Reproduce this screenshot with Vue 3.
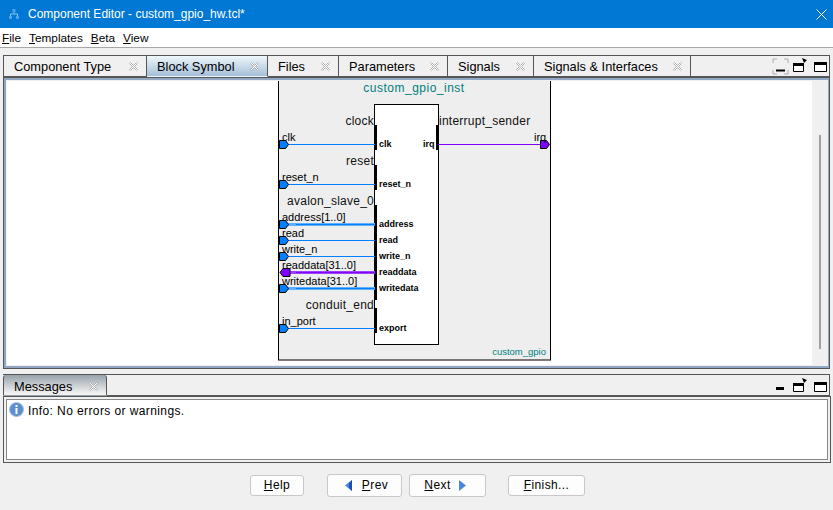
<script setup>
const menus = [['F','ile'],['T','emplates'],['B','eta'],['V','iew']]
const tabs = [
  { name: 'Component Type', w: 144 },
  { name: 'Block Symbol', w: 121, active: true },
  { name: 'Files', w: 71 },
  { name: 'Parameters', w: 109 },
  { name: 'Signals', w: 86 },
  { name: 'Signals & Interfaces', w: 157 },
]
const rows = [
  { ext: 'clk', int: 'clk', y: 144, c: 'blue' },
  { ext: 'reset_n', int: 'reset_n', y: 184, c: 'blue' },
  { ext: 'address[1..0]', int: 'address', y: 224, c: 'blue', bus: true },
  { ext: 'read', int: 'read', y: 240, c: 'blue' },
  { ext: 'write_n', int: 'write_n', y: 256, c: 'blue' },
  { ext: 'readdata[31..0]', int: 'readdata', y: 272, c: 'purple', bus: true, out: true },
  { ext: 'writedata[31..0]', int: 'writedata', y: 288, c: 'blue', bus: true },
  { ext: 'in_port', int: 'export', y: 328, c: 'blue' },
]
const ifaces = [
  { name: 'clock', y: 125, top: 125, h: 25 },
  { name: 'reset', y: 165, top: 165, h: 25 },
  { name: 'avalon_slave_0', y: 205, top: 205, h: 95 },
  { name: 'conduit_end', y: 309, top: 308, h: 25 },
]
const colors = { blue: '#0080ff', purple: '#8000ff' }
const light = { blue: '#5fb0ff', purple: '#a040ff' }
</script>

<template>
  <div class="window">
    <header class="title">
      <svg class="logo" width="12" height="12" viewBox="0 0 12 12">
        <path d="M4.500 1h3v3h-3zM1 8h3v3H1zM8 8h3v3H8z" fill="#4ea3e6"/>
        <path d="M6 4v2M2.500 8V6h7v2" stroke="#8cc4f0" fill="none"/>
      </svg>
      <span class="title-text">Component Editor - custom_gpio_hw.tcl*</span>
      <svg class="close" width="11" height="11" viewBox="0 0 11 11"><path d="M.5.500l10 10M10.500.500l-10 10" stroke="#fff" stroke-width="1"/></svg>
    </header>
    <nav class="menu">
      <span v-for="m in menus" :key="m[0]" class="menu-item"><u>{{ m[0] }}</u>{{ m[1] }}</span>
    </nav>

    <section class="folder top">
      <div class="tabs">
        <div v-for="t in tabs" :key="t.name" class="tab" :class="{ active: t.active }" :style="{ width: t.w + 'px' }">
          <span class="tab-label">{{ t.name }}</span>
          <svg class="x" width="11" height="11" viewBox="0 0 11 11"><path d="M1.500 2.500l1-1 3 3 3-3 1 1-3 3 3 3-1 1-3-3-3 3-1-1 3-3z" fill="#fff" stroke="#a0a0a0" stroke-width=".8"/></svg>
        </div>
        <div class="tab-rest">
          <svg width="17" height="17" viewBox="0 0 17 17" class="fast"><path d="M1 5V1h4M12 1h4v4M1 12v4h4M12 16h4v-4" fill="none" stroke="#aaa"/><path d="M4 12.500h9" stroke="#000" stroke-width="2"/></svg>
          <svg width="15" height="15" viewBox="0 0 15 15" class="det"><path d="M.5 5.500h10v8H.5z" fill="#fff" stroke="#000"/><path d="M0 5h11v3H0z"/><path d="M7 5l4-3M9 0l5 2-3 3z"/></svg>
          <svg width="13" height="11" viewBox="0 0 13 11" class="max"><path d="M.5.500h12v9H.500z" fill="#fff" stroke="#000"/><path d="M0 0h13v3H0z"/></svg>
        </div>
      </div>
      <div class="pane">
        <div class="canvas">
          <svg class="diagram" width="805" height="285" viewBox="7 81 805 285">
            <rect x="278.500" y="60" width="272" height="300" fill="#eee" stroke="#000"/>
            <text x="414" y="92" class="tl" text-anchor="middle">custom_gpio_inst</text>
            <rect x="374.500" y="104.500" width="64" height="240" fill="#fff" stroke="#000"/>
            <text x="546" y="355" class="ts" text-anchor="end">custom_gpio</text>

            <g v-for="f in ifaces" :key="f.name">
              <rect x="374" :y="f.top" width="3" :height="f.h" fill="#000"/>
              <text x="374" :y="f.y" class="if" text-anchor="end">{{ f.name }}</text>
            </g>
            <rect x="436" y="125" width="3" height="25" fill="#000"/>
            <text x="439" y="125" class="if">interrupt_sender</text>

            <g v-for="r in rows" :key="r.ext">
              <template v-if="r.bus">
                <rect x="288" :y="r.y - 1" width="87" height="3" :fill="light[r.c]"/>
                <rect x="296" :y="r.y" width="79" height="1" :fill="colors[r.c]"/>
              </template>
              <rect v-else x="288" :y="r.y" width="87" height="1" :fill="colors[r.c]"/>
              <path v-if="!r.out" :d="`M279.500 ${r.y - 3.5}h6l3 4-3 4h-6z`" :fill="colors[r.c]" stroke="#000"/>
              <path v-else :d="`M280 ${r.y + .5}l3-4h7v8h-7z`" :fill="colors[r.c]" stroke="#000"/>
              <text x="282" :y="r.y - 3" class="ext">{{ r.ext }}</text>
              <text x="379" :y="r.y + 3" class="int">{{ r.int }}</text>
            </g>

            <rect x="438" y="144" width="103" height="1" :fill="colors.purple"/>
            <path d="M540.500 140.500h6l3 4-3 4h-6z" :fill="colors.purple" stroke="#000"/>
            <text x="534" y="141" class="ext">irq</text>
            <text x="423" y="147" class="int">irq</text>
          </svg>
        </div>
        <div class="scroll"><i></i></div>
      </div>
    </section>

    <section class="folder bottom">
      <div class="tabs">
        <div class="tab msg">
          <span class="tab-label">Messages</span>
          <svg class="x" width="11" height="11" viewBox="0 0 11 11"><path d="M1.500 2.500l1-1 3 3 3-3 1 1-3 3 3 3-1 1-3-3-3 3-1-1 3-3z" fill="#fff" stroke="#a0a0a0" stroke-width=".8"/></svg>
        </div>
        <div class="tab-rest msg-rest">
          <svg width="9" height="3" viewBox="0 0 9 3" class="min"><path d="M0 0h8v3H0z"/></svg>
          <svg width="15" height="15" viewBox="0 0 15 15" class="det"><path d="M.5 5.500h10v8H.5z" fill="#fff" stroke="#000"/><path d="M0 5h11v3H0z"/><path d="M7 5l4-3M9 0l5 2-3 3z"/></svg>
          <svg width="13" height="11" viewBox="0 0 13 11" class="max"><path d="M.5.500h12v9H.500z" fill="#fff" stroke="#000"/><path d="M0 0h13v3H0z"/></svg>
        </div>
      </div>
      <div class="log">
        <svg width="15" height="15" viewBox="0 0 15 15"><circle cx="7.500" cy="7.500" r="7" fill="#5b8fd0" stroke="#a8c0dc"/><path d="M6.500 3h2v2h-2zM6.500 6h2v6h-2z" fill="#fff"/></svg>
        <span>Info: No errors or warnings.</span>
      </div>
    </section>

    <footer class="actions">
      <button class="help"><span><u>H</u>elp</span></button>
      <button class="prev">
        <svg width="8" height="11" viewBox="0 0 8 11"><path d="M7 0v11L0 5.500z" fill="#4a86d8"/><path d="M7 0v11L4 8V3z" fill="#1a50b8"/></svg>
        <span><u>P</u>rev</span>
      </button>
      <button class="next">
        <span><u>N</u>ext</span>
        <svg width="8" height="11" viewBox="0 0 8 11"><path d="M1 0v11l7-5.500z" fill="#4a86d8"/></svg>
      </button>
      <button class="finish"><span><u>F</u>inish...</span></button>
    </footer>
  </div>
</template>

<style>
html, body { margin: 0; background: #f0f0f0; }
</style>

<style scoped>
.window {
  width: 833px; height: 510px; overflow: hidden; background: #f0f0f0;
  display: flex; flex-direction: column;
  font-family: "Liberation Sans", Arial, sans-serif; font-size: 12px; color: #000;
}
.title {
  height: 28px; background: #0078d4; color: #fff; display: flex; align-items: center;
  padding: 0 6px 0 8px; font-size: 12px; gap: 8px; flex: none;
}
.title-text { flex: 1; }
.menu {
  height: 19px; background: #fff; border-bottom: 1px solid #a8a8a8; display: flex; align-items: center;
  padding-left: 2px; gap: 8px; font-size: 11.800px; flex: none;
}
.folder { margin: 0 3px; flex: none; display: flex; flex-direction: column; }
.top { margin-top: 7px; height: 314px; }
.tabs {
  height: 21px; display: flex; flex: none; border-top: 1px solid #555; border-right: 1px solid #555;
  background: #f0f0f0;
}
.tab {
  box-sizing: border-box; display: flex; align-items: center; justify-content: space-between;
  padding: 0 7px 0 10px; border-right: 1px solid #555; border-bottom: 1px solid #555;
  font-size: 12.800px; flex: none;
}
.tab:first-child { border-left: 1px solid #555; }
.tab.active {
  background: linear-gradient(#eef7fa, #a5bfd9); border-bottom-color: transparent;
}
.x { flex: none; }
.tab-rest {
  flex: 1; border-bottom: 1px solid #555; display: flex; align-items: center; justify-content: flex-end;
  padding-right: 2px; box-sizing: border-box;
}
.fast { margin-right: 4px; }
.det { margin-right: 6px; margin-top: -1px; }
.max { margin-top: 2px; }
.msg-rest { padding-top: 2px; }
.pane {
  flex: 1; min-height: 0; display: flex; background: #f0f0f0;
  border: 3px solid #91a7c4; border-right-width: 2px; outline: 1px solid #555; outline-offset: -1px;
  padding: 1px 0 1px 1px;
  box-sizing: border-box;
}
.canvas { flex: 1; background: #fff; overflow: hidden; position: relative; }
.diagram { display: block; }
.scroll { width: 16px; position: relative; flex: none; }
.scroll i { position: absolute; left: 7px; top: 54px; width: 2px; height: 214px; background: #a0a0a0; }
.tl { font: 12px "Liberation Sans", sans-serif; fill: #008080; letter-spacing: .5px; }
.ts { font: 9.500px "Liberation Sans", sans-serif; fill: #008080; }
.if { font: 12px "Liberation Sans", sans-serif; fill: #111; letter-spacing: .25px; }
.ext { font: 11px "Liberation Sans", sans-serif; fill: #000; }
.int { font: bold 9px "Liberation Sans", sans-serif; fill: #000; }

.bottom { margin-top: 5px; height: 89px; }
.tab.msg {
  width: 104px; background: linear-gradient(#97a2ab, #f0f0f0 90%); border-bottom-color: transparent;
  border-radius: 3px 3px 0 0; padding-top: 2px;
}
.min { margin-right: 8px; margin-top: 5px; }
.log {
  flex: 1; min-height: 0; background: #fff; box-sizing: border-box;
  border: 1px solid #888;
  margin: 3px 2px 3px 3px; display: flex; align-items: flex-start; gap: 4px;
  padding: 2px 2px; font-size: 12px; letter-spacing: .4px;
  box-shadow: 0 0 0 2px #f0f0f0, 0 0 0 3px #555;
}
.log span { line-height: 18px; }

.actions { flex: 1; display: flex; align-items: center; padding-left: 250px; margin-top: -3px; }
button {
  font: 12px "Liberation Sans", sans-serif; letter-spacing: .4px; color: #000;
  background: #fdfdfd; border: 1px solid #c8c8c8; border-radius: 3px; padding: 0;
  display: flex; align-items: center; justify-content: center; gap: 9px; box-sizing: border-box;
}
.help { width: 54px; height: 21px; margin-right: 23px; }
.prev { width: 75px; height: 23px; margin-right: 7px; padding-left: 4px; }
.next { width: 77px; height: 23px; margin-right: 22px; gap: 7px; padding-right: 5px; }
.finish { width: 77px; height: 21px; }
</style>
